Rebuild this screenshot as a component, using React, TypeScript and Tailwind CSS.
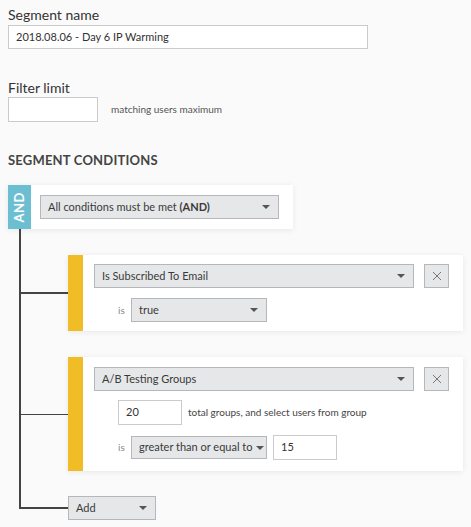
import type { ReactNode } from 'react'

function Caret() {
    return (
        <span className="w-0 h-0 border-l-[4px] border-r-[4px] border-t-[4px] border-l-transparent border-r-transparent border-t-[#555] shrink-0" />
    )
}

function Select({ className, children }: { className: string; children: ReactNode }) {
    return (
        <div className={`flex items-center justify-between gap-[4px] bg-[#e6e7e9] border border-[#b5b7ba] pl-[7px] pr-[8px] text-[11px] text-[#3a3a3a] ${className}`}>
            <span className="whitespace-nowrap">{children}</span>
            <Caret />
        </div>
    )
}

function CloseButton() {
    return (
        <div className="w-[25px] h-[24px] bg-[#e6e7e9] border border-[#b5b7ba] flex items-center justify-center shrink-0">
            <svg width="10" height="10" viewBox="0 0 10 10" className="text-[#777]">
                <path d="M1 1L9 9M9 1L1 9" stroke="currentColor" strokeWidth="1" />
            </svg>
        </div>
    )
}

function ConditionCard({ children }: { children: ReactNode }) {
    return (
        <div className="flex bg-white shadow-[0_1px_6px_rgba(0,0,0,0.08)] w-[395px]">
            <div className="w-[15px] bg-[#f0bd27] shrink-0" />
            <div className="flex-1 pl-[11px] pr-[14px]">{children}</div>
        </div>
    )
}

export default function App() {
    return (
        <div
            className="min-h-screen bg-[#fafafa] text-[#333] px-[8px] pt-[6px]"
            style={{ fontFamily: 'Lato, "Noto Sans", sans-serif' }}
        >
            <label className="block text-[14px] leading-[18px] text-[#333]">Segment name</label>
            <div className="mt-[1px] w-[360px] h-[24px] bg-white border border-[#cbcbcb] flex items-center px-[7px] text-[11px] text-[#333]">
                2018.08.06 - Day 6 IP Warming
            </div>

            <label className="block mt-[30px] text-[14px] leading-[18px] text-[#333]">Filter limit</label>
            <div className="mt-[0px] flex items-center">
                <div className="w-[90px] h-[25px] bg-white border border-[#cbcbcb]" />
                <span className="ml-[13px] text-[10px] text-[#555]">matching users maximum</span>
            </div>

            <h2 className="mt-[30px] text-[13px] leading-[16px] font-bold text-[#444] tracking-[0.2px]">SEGMENT CONDITIONS</h2>

            <div className="mt-[17px] flex w-[285px] h-[44px] bg-white shadow-[0_1px_6px_rgba(0,0,0,0.08)]">
                <div className="w-[23px] bg-[#6cbfd0] flex items-center justify-center shrink-0">
                    <span className="[writing-mode:vertical-rl] rotate-180 text-white font-bold text-[13px] tracking-[0.5px]">AND</span>
                </div>
                <div className="flex items-center pl-[9px]">
                    <Select className="w-[239px] h-[24px]">
                        All conditions must be met <b>(AND)</b>
                    </Select>
                </div>
            </div>

            <div className="ml-[11px]">
                <div className="border-l-2 border-[#444] pt-[26px] pb-[25px]">
                    <div className="flex items-center">
                        <div className="w-[47px] h-[2px] bg-[#444] shrink-0" />
                        <ConditionCard>
                            <div className="pt-[9px] pb-[9px]">
                                <div className="flex items-center gap-[10px]">
                                    <Select className="w-[320px] h-[24px]">Is Subscribed To Email</Select>
                                    <CloseButton />
                                </div>
                                <div className="flex items-center mt-[10px] pl-[24px]">
                                    <span className="text-[10px] text-[#888] w-[13px]">is</span>
                                    <Select className="w-[136px] h-[24px]">true</Select>
                                </div>
                            </div>
                        </ConditionCard>
                    </div>

                    <div className="flex items-center mt-[26px]">
                        <div className="w-[47px] h-px bg-[#444] shrink-0" />
                        <ConditionCard>
                            <div className="pt-[10px] pb-[11px]">
                                <div className="flex items-center gap-[10px]">
                                    <Select className="w-[320px] h-[24px]">A/B Testing Groups</Select>
                                    <CloseButton />
                                </div>
                                <div className="flex items-center mt-[9px] pl-[24px]">
                                    <div className="w-[64px] h-[25px] bg-white border border-[#cbcbcb] flex items-center px-[7px] text-[11px]">20</div>
                                    <span className="ml-[6px] text-[10px] text-[#444]">total groups, and select users from group</span>
                                </div>
                                <div className="flex items-center mt-[10px] pl-[24px]">
                                    <span className="text-[10px] text-[#888] w-[13px]">is</span>
                                    <Select className="w-[136px] h-[23px]">greater than or equal to</Select>
                                    <div className="ml-[6px] w-[64px] h-[25px] bg-white border border-[#cbcbcb] flex items-center px-[7px] text-[11px]">15</div>
                                </div>
                            </div>
                        </ConditionCard>
                    </div>
                </div>

                <div className="flex items-start">
                    <div className="w-[49px] h-[13px] border-l-2 border-b-2 border-[#444] shrink-0" />
                    <Select className="w-[88px] h-[24px]">Add</Select>
                </div>
            </div>
        </div>
    )
}
